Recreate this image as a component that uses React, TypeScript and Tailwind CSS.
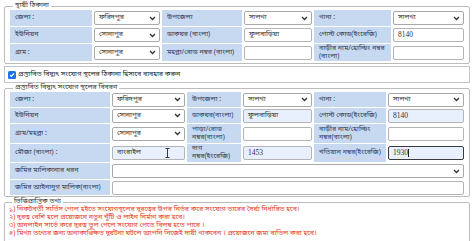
import React from 'react';

type Cell =
  | { kind: 'label'; text: string; span?: string }
  | { kind: 'select'; value?: string; span?: string }
  | { kind: 'input'; value?: string; filled?: boolean; focused?: boolean; cursor?: boolean; span?: string };

function Chevron() {
  return (
    <svg width="7" height="5" viewBox="0 0 7 5" className="shrink-0">
      <path d="M1 1l2.5 2.5L6 1" fill="none" stroke="#333" strokeWidth="1.3" />
    </svg>
  );
}

// latin digits look like a small serif in the screenshot, bengali stays as is
function valueClass(v?: string) {
  return v && /^[0-9]+$/.test(v) ? "font-['Liberation_Serif',serif] text-[7.5px]" : 'text-[7px]';
}

function Field({ cell }: { cell: Cell }) {
  if (cell.kind === 'label') {
    return (
      <div className={`bg-[#c6d9f1] text-[#34405a] pl-[5px] pr-[1px] flex items-center overflow-hidden ${cell.span ?? ''}`}>
        <span className="whitespace-pre leading-[8px]">{cell.text}</span>
      </div>
    );
  }
  if (cell.kind === 'select') {
    return (
      <div className={`flex items-center py-[1px] ${cell.span ?? ''}`}>
        <div className="h-[14px] w-full bg-white border border-[#a9a9a9] rounded-[2px] flex items-center justify-between pl-[4px] pr-[3px] text-[#333]">
          <span className={valueClass(cell.value)}>{cell.value}</span>
          <Chevron />
        </div>
      </div>
    );
  }
  return (
    <div className={`flex items-center py-[1px] ${cell.span ?? ''}`}>
      <div
        className={`relative h-[14px] w-full rounded-[2px] flex items-center pl-[4px] text-[#333] ${
          cell.focused ? 'border-[1.5px] border-[#3b3b3b]' : 'border border-[#b4b4b4]'
        } ${cell.filled ? 'bg-[#e8f0fe]' : 'bg-white'}`}
      >
        <span className={valueClass(cell.value)}>{cell.value}</span>
        {cell.focused && <span className="w-px h-[8px] bg-[#222]" />}
        {cell.cursor && (
          <svg width="5" height="10" viewBox="0 0 5 10" className="absolute left-[52px] top-[1px]">
            <path d="M0.5 0.5h4M2.5 0.5v9M0.5 9.5h4" fill="none" stroke="#222" strokeWidth="0.9" />
          </svg>
        )}
      </div>
    </div>
  );
}

const permanent: Cell[] = [
  { kind: 'label', text: 'জেলা :' },
  { kind: 'select', value: 'ফরিদপুর' },
  { kind: 'label', text: 'উপজেলা' },
  { kind: 'select', value: 'সালথা' },
  { kind: 'label', text: 'থানা :' },
  { kind: 'select', value: 'সালথা' },
  { kind: 'label', text: 'ইউনিয়ন' },
  { kind: 'select', value: 'সোনাপুর' },
  { kind: 'label', text: 'ডাকঘর (বাংলা)' },
  { kind: 'input', value: 'ফুলবাড়িয়া' },
  { kind: 'label', text: 'পোস্ট কোড(ইংরেজি)' },
  { kind: 'input', value: '8140' },
  { kind: 'label', text: 'গ্রাম :' },
  { kind: 'select', value: 'সোনাপুর' },
  { kind: 'label', text: 'মহল্লা/রোড নম্বর (বাংলা)' },
  { kind: 'input' },
  { kind: 'label', text: 'বাড়ীর নাম/হোল্ডিং নম্বর\n(বাংলা)' },
  { kind: 'input' },
];

const proposed: Cell[] = [
  { kind: 'label', text: 'জেলা :' },
  { kind: 'select', value: 'ফরিদপুর' },
  { kind: 'label', text: 'উপজেলা :' },
  { kind: 'select', value: 'সালথা' },
  { kind: 'label', text: 'থানা :' },
  { kind: 'select', value: 'সালথা' },
  { kind: 'label', text: 'ইউনিয়ন' },
  { kind: 'select', value: 'সোনাপুর' },
  { kind: 'label', text: 'ডাকঘর(বাংলা)' },
  { kind: 'input', value: 'ফুলবাড়িয়া', filled: true },
  { kind: 'label', text: 'পোস্ট কোড(ইংরেজি)' },
  { kind: 'input', value: '8140', filled: true },
  { kind: 'label', text: 'গ্রাম/মহল্লা :' },
  { kind: 'select', value: 'সোনাপুর' },
  { kind: 'label', text: 'পাড়া/রোড\nনম্বর(বাংলা)' },
  { kind: 'input' },
  { kind: 'label', text: 'বাড়ীর নাম/হোল্ডিং\nনম্বর(বাংলা)' },
  { kind: 'input' },
  { kind: 'label', text: 'মৌজা (বাংলা) :' },
  { kind: 'input', value: 'বাংরাইল', filled: true, cursor: true },
  { kind: 'label', text: 'দাগ\nনম্বর(ইংরেজি)' },
  { kind: 'input', value: '1453', filled: true },
  { kind: 'label', text: 'খতিয়ান নম্বর(ইংরেজি)' },
  { kind: 'input', value: '1930', filled: true, focused: true },
  { kind: 'label', text: 'জমির মালিকানার ধরন' },
  { kind: 'select', span: 'col-span-5' },
  { kind: 'label', text: 'জমির আইনানুগ মালিক(বাংলা)' },
  { kind: 'input', span: 'col-span-5' },
];

const notes = [
  '১) নিকটবর্তী সার্ভিস পোল হইতে সংযোগস্থলের দূরত্বের উপর নির্ভর করে সংযোগ তারের দৈর্ঘ্য নির্ধারিত হবে।',
  '২) দূরত্ব বেশি হলে প্রয়োজনে নতুন খুঁটি ও লাইন নির্মাণ করা হবে।',
  '৩) অনলাইন সার্ভে করে দূরত্ব ভুল পেলে সংযোগ পেতে বিলম্ব হতে পারে ।',
  '৪) মিথ্যা তথ্যের জন্য অনাকাঙ্ক্ষিত দুর্ঘটনা ঘটলে আপনি নিজেই দায়ী থাকবেন । প্রয়োজনে জমা বাতিল করা হবে।',
];

export default function App() {
  return (
    <div className="w-[474px] h-[241px] overflow-hidden bg-white px-[4px] pt-[2px] text-[7px] leading-[8px] font-['Noto_Sans_Bengali','Noto_Sans',sans-serif]">
      <fieldset className="border border-[#bcbcbc] rounded-[2px] pl-[5px] pr-[5px] pb-[2px]">
        <legend className="ml-[3px] px-[2px] leading-[8px] text-[#333]">স্থায়ী ঠিকানা</legend>
        <div className="grid grid-cols-[82px_66px_80px_68px_77px_71px] grid-rows-[16px_16px_17px] gap-x-[2px] gap-y-[1px]">
          {permanent.map((c, i) => (
            <Field key={i} cell={c} />
          ))}
        </div>
      </fieldset>

      <div className="mt-[2px] h-[17px] border border-[#c4c4c4] flex items-center gap-[2px] pl-[3px] text-[#222]">
        <span className="w-[8px] h-[8px] rounded-[1.5px] bg-[#1a73e8] flex items-center justify-center">
          <svg width="6" height="6" viewBox="0 0 6 6">
            <path d="M1 3.2l1.3 1.3L5 1.5" fill="none" stroke="#fff" strokeWidth="1.2" />
          </svg>
        </span>
        <span>প্রস্তাবিত বিদ্যুৎ সংযোগ স্থলের ঠিকানা হিসাবে ব্যবহার করুন</span>
      </div>

      <fieldset className="mt-[1px] border border-[#bcbcbc] rounded-[2px] pl-[5px] pr-[5px] pb-[1px]">
        <legend className="ml-[3px] px-[2px] leading-[8px] text-[#333]">প্রস্তাবিত বিদ্যুৎ সংযোগ স্থলের বিবরণ</legend>
        <div className="grid grid-cols-[100px_73px_54px_69px_72px_76px] grid-rows-[15px_15px_19px_18px_16px_15px] gap-x-[2px] gap-y-[1px]">
          {proposed.map((c, i) => (
            <Field key={i} cell={c} />
          ))}
        </div>
      </fieldset>

      <fieldset className="mt-[1px] border border-[#bcbcbc] rounded-[2px] pl-[4px] pr-[4px] pb-[4px]">
        <legend className="ml-[3px] px-[2px] leading-[8px] text-[#333]">ভিত্তিপ্রান্তিক তথ্য</legend>
        <div className="flex flex-col text-[#e23c24] text-[7px] leading-[8px]">
          {notes.map((n) => (
            <span key={n} className="whitespace-nowrap">{n}</span>
          ))}
        </div>
      </fieldset>
    </div>
  );
}
